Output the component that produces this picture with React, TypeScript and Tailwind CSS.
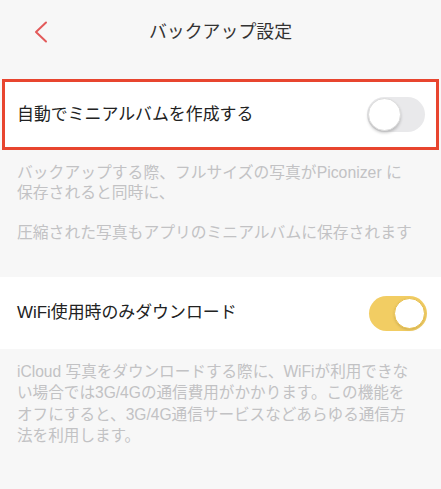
import React from "react";

const font = {
  fontFamily: '"Liberation Sans", "Noto Sans CJK JP", sans-serif',
};

const Toggle: React.FC<{ on?: boolean }> = ({ on }) => {
  return on ? (
    <div className="flex h-[35px] w-[58px] items-center justify-end rounded-full bg-[#f2cd63] p-[2px]">
      <div className="h-[31px] w-[31px] rounded-full border border-[#e9c14f] bg-white shadow-sm" />
    </div>
  ) : (
    <div className="flex h-[35px] w-[58px] items-center justify-start rounded-full bg-[#e9e9eb] p-[1px]">
      <div className="h-[33px] w-[33px] rounded-full border border-[#dcdcdc] bg-white shadow-[0_2px_3px_rgba(0,0,0,0.2)]" />
    </div>
  );
};

const App: React.FC = () => {
  return (
    <div className="min-h-screen bg-[#f7f7f7]" style={font}>
      <header className="relative flex h-[64px] items-center justify-center">
        <svg
          className="absolute left-[34px] top-[21px]"
          width="14"
          height="22"
          viewBox="0 0 14 22"
          fill="none"
        >
          <polyline
            points="12,1.5 2,11 12,20.5"
            stroke="#e35a5a"
            strokeWidth="2"
            strokeLinecap="round"
            strokeLinejoin="round"
          />
        </svg>
        <h1 className="text-[17.9px] font-normal text-[#333]">
          バックアップ設定
        </h1>
      </header>

      <div className="mt-[15px] mx-[2px] flex h-[71px] items-center justify-between border-[3px] border-[#e8452f] bg-white pl-[12px] pr-[11px]">
        <span className="text-[16.9px] text-[#222]">
          自動でミニアルバムを作成する
        </span>
        <Toggle />
      </div>

      <div className="px-[17px] pt-[13px] pb-[34px] text-[15.8px] leading-[20px] text-[#c2c2c4]">
        <p className="whitespace-nowrap">
          バックアップする際、フルサイズの写真がPiconizer に
        </p>
        <p className="whitespace-nowrap">保存されると同時に、</p>
        <p className="mt-[20px] whitespace-nowrap">
          圧縮された写真もアプリのミニアルバムに保存されます
        </p>
      </div>

      <div className="flex h-[72px] items-center justify-between bg-white pl-[17px] pr-[14px]">
        <span className="text-[16.9px] text-[#222]">
          WiFi使用時のみダウンロード
        </span>
        <Toggle on />
      </div>

      <div className="px-[17px] pt-[12px] pb-[20px] text-[15.6px] leading-[21.3px] text-[#c2c2c4]">
        <p className="whitespace-nowrap">
          iCloud 写真をダウンロードする際に、WiFiが利用できな
        </p>
        <p className="whitespace-nowrap">
          い場合では3G/4Gの通信費用がかかります。この機能を
        </p>
        <p className="whitespace-nowrap">
          オフにすると、3G/4G通信サービスなどあらゆる通信方
        </p>
        <p className="whitespace-nowrap">法を利用します。</p>
      </div>
    </div>
  );
};

export default App;
